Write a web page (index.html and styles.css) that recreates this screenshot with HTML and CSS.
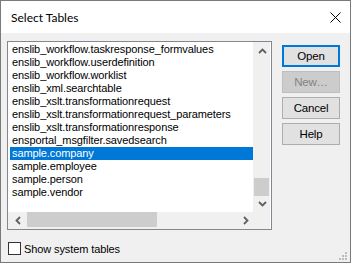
FILE: index.html
```html
<!DOCTYPE html>
<html>
<head>
<meta charset="utf-8">
<link rel="stylesheet" href="styles.css">
</head>
<body>
<div class="window">
  <div class="titlebar">
    <span class="title">Select Tables</span>
    <svg class="close" width="11" height="11" viewBox="0 0 11 11"><path d="M0.5 0.5 L10.5 10.5 M10.5 0.5 L0.5 10.5" stroke="#000" stroke-width="1" fill="none"/></svg>
  </div>
  <div class="content">
    <div class="listbox">
      <div class="items">
        <div class="item">enslib_workflow.taskresponse_formvalues</div>
        <div class="item">enslib_workflow.userdefinition</div>
        <div class="item">enslib_workflow.worklist</div>
        <div class="item">enslib_xml.searchtable</div>
        <div class="item">enslib_xslt.transformationrequest</div>
        <div class="item">enslib_xslt.transformationrequest_parameters</div>
        <div class="item">enslib_xslt.transformationresponse</div>
        <div class="item">ensportal_msgfilter.savedsearch</div>
        <div class="item selected">sample.company</div>
        <div class="item">sample.employee</div>
        <div class="item">sample.person</div>
        <div class="item">sample.vendor</div>
      </div>
      <div class="vscroll">
        <svg class="arrow" width="9" height="6" viewBox="0 0 9 6"><polyline points="1,5 4.5,1.5 8,5" fill="none" stroke="#606060" stroke-width="1.8"/></svg>
        <div class="vtrack"><div class="vthumb"></div></div>
        <svg class="arrow" width="9" height="6" viewBox="0 0 9 6"><polyline points="1,1 4.5,4.5 8,1" fill="none" stroke="#606060" stroke-width="1.8"/></svg>
      </div>
      <div class="hscroll">
        <svg class="harrow" width="6" height="9" viewBox="0 0 6 9"><polyline points="5,1 1.5,4.5 5,8" fill="none" stroke="#606060" stroke-width="1.8"/></svg>
        <div class="htrack"><div class="hthumb"></div></div>
        <svg class="harrow" width="6" height="9" viewBox="0 0 6 9"><polyline points="1,1 4.5,4.5 1,8" fill="none" stroke="#606060" stroke-width="1.8"/></svg>
      </div>
      <div class="corner"></div>
    </div>
    <div class="buttons">
      <button class="btn default">Open</button>
      <button class="btn disabled">New…</button>
      <button class="btn">Cancel</button>
      <button class="btn">Help</button>
    </div>
  </div>
  <label class="check">
    <span class="box"></span>
    <span class="label">Show system tables</span>
  </label>
  <svg class="grip" width="9" height="9" viewBox="0 0 9 9">
    <rect x="6" y="0" width="2" height="2" fill="#bcbcbc"/>
    <rect x="3" y="3" width="2" height="2" fill="#bcbcbc"/>
    <rect x="6" y="3" width="2" height="2" fill="#bcbcbc"/>
    <rect x="0" y="6" width="2" height="2" fill="#bcbcbc"/>
    <rect x="3" y="6" width="2" height="2" fill="#bcbcbc"/>
    <rect x="6" y="6" width="2" height="2" fill="#bcbcbc"/>
  </svg>
</div>
</body>
</html>
```
FILE: styles.css
```css
* { box-sizing: border-box; }
html, body { margin: 0; padding: 0; background: #ffffff; }
body { font-family: "Liberation Sans", Arial, sans-serif; font-size: 11px; color: #000; }

.window {
  position: relative;
  width: 351px;
  height: 263px;
  border: 1px solid #7a7a7a;
  background: #f0f0f0;
  display: flex;
  flex-direction: column;
}

.titlebar {
  height: 32px;
  background: #ffffff;
  display: flex;
  align-items: center;
  justify-content: space-between;
  padding: 0 9px 0 10px;
  flex: none;
}
.title { font-family: Lato, "Liberation Sans", sans-serif; font-size: 12px; color: #000; }
.close { display: block; }

.content {
  display: flex;
  align-items: flex-start;
  padding: 8px 0 0 6px;
}

.listbox {
  width: 265px;
  height: 189px;
  border: 1px solid #828790;
  background: #ffffff;
  display: grid;
  grid-template-columns: 245px 17px;
  grid-template-rows: 170px 17px;
  flex: none;
}
.items {
  background: #ffffff;
  padding: 1px 0 0 2px;
  overflow: hidden;
  border-bottom-right-radius: 3px;
}
.item {
  height: 13px;
  line-height: 13px;
  padding-left: 2px;
  white-space: nowrap;
  letter-spacing: -0.1px;
}
.item.selected { background: #0078d7; color: #ffffff; }

.vscroll {
  background: #f0f0f0;
  display: flex;
  flex-direction: column;
  align-items: center;
  padding-top: 6px;
}
.vscroll .arrow { display: block; flex: none; margin-left: 1px; }
.vtrack { flex: 1; width: 100%; display: flex; flex-direction: column; justify-content: flex-end; padding-bottom: 5px; }
.vthumb { width: 15px; height: 18px; background: #cdcdcd; margin-left: 1px; }
.vscroll .arrow:last-child { margin-bottom: 5px; }

.hscroll {
  background: #f0f0f0;
  display: flex;
  align-items: center;
  padding: 0 4px 1px 7px;
}
.harrow { display: block; flex: none; }
.htrack { flex: 1; height: 100%; display: flex; padding-left: 6px; }
.hthumb { width: 130px; height: 15px; background: #cdcdcd; }
.corner { background: #f0f0f0; }

.buttons {
  display: flex;
  flex-direction: column;
  gap: 4px;
  margin: 4px 0 0 10px;
}
.btn {
  width: 58px;
  height: 22px;
  border: 1px solid #adadad;
  background: #e1e1e1;
  font-family: "Liberation Sans", Arial, sans-serif;
  font-size: 11.5px;
  letter-spacing: -0.2px;
  color: #000;
  padding: 0;
  margin: 0;
}
.btn.default { border: 2px solid #0078d7; }
.btn.disabled { background: #cccccc; border-color: #bfbfbf; color: #838383; }

.check {
  display: flex;
  align-items: center;
  margin: 12px 0 0 7px;
  gap: 3px;
}
.box {
  width: 13px;
  height: 13px;
  border: 1px solid #333333;
  background: #ffffff;
  flex: none;
}
.label { font-size: 11px; letter-spacing: -0.1px; }

.grip { position: absolute; right: 2px; bottom: 1px; }
```
